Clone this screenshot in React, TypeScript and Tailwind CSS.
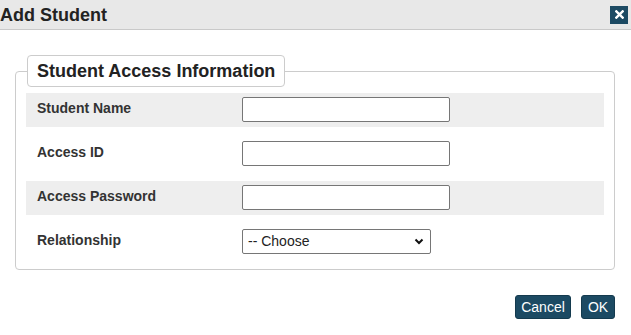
import { useState } from "react";

const rows = [
  { label: "Student Name", kind: "input", shaded: true },
  { label: "Access ID", kind: "input", shaded: false },
  { label: "Access Password", kind: "password", shaded: true },
  { label: "Relationship", kind: "select", shaded: false },
];

export default function App() {
  const [relationship, setRelationship] = useState("");

  return (
    <div className="w-[631px] h-[335px] bg-white font-['Liberation_Sans',Arial,sans-serif] text-[#333]">
      {/* Title bar */}
      <div className="h-[30px] bg-[#e8e8e8] border-b border-[#c9c9c9] flex items-center justify-between pr-[3px]">
        <h2 className="text-[18px] font-bold text-[#222] leading-none">Add Student</h2>
        <button className="w-[18px] h-[18px] bg-[#1c4a63] flex items-center justify-center">
          <svg width="9" height="9" viewBox="0 0 10 10">
            <path d="M1.5 1.5 L8.5 8.5 M8.5 1.5 L1.5 8.5" stroke="white" strokeWidth="2.6" strokeLinecap="square" />
          </svg>
        </button>
      </div>

      {/* Access info */}
      <fieldset className="ml-[15px] mt-[25px] w-[600px] border border-[#cccccc] rounded-[4px] px-[10px] pt-[6px] pb-[10px]">
        <legend className="ml-px h-[32px] px-[9px] border border-[#cccccc] rounded-[4px] bg-white text-[18px] font-bold text-[#222] flex items-center">
          Student Access Information
        </legend>
        <div className="flex flex-col gap-[10px]">
          {rows.map((r) => (
            <div key={r.label} className={`h-[34px] flex items-start ${r.shaded ? "bg-[#eeeeee]" : ""}`}>
              <label className="w-[216px] pl-[11px] pt-[7px] text-[14px] leading-[16px] font-bold text-[#333]">{r.label}</label>
              {r.kind === "select" ? (
                <div className="relative mt-[4px] w-[189px] h-[25px]">
                  <select
                    value={relationship}
                    onChange={(e) => setRelationship(e.target.value)}
                    className="appearance-none w-full h-full border border-[#767676] rounded-[2px] bg-white pl-[5px] text-[14px] text-[#222]"
                  >
                    <option value="">-- Choose</option>
                    <option value="parent">Parent</option>
                    <option value="guardian">Guardian</option>
                  </select>
                  <svg className="absolute right-[7px] top-[9px] pointer-events-none" width="10" height="7" viewBox="0 0 10 7">
                    <path d="M1.5 1.5 L5 5 L8.5 1.5" stroke="#111" strokeWidth="2" fill="none" />
                  </svg>
                </div>
              ) : (
                <input
                  type={r.kind === "password" ? "password" : "text"}
                  className="mt-[4px] w-[208px] h-[25px] border border-[#767676] rounded-[2px] bg-white px-1 text-[14px]"
                />
              )}
            </div>
          ))}
        </div>
      </fieldset>

      {/* Actions */}
      <div className="mt-[25px] w-[615px] flex justify-end gap-[10px]">
        <button className="w-[56px] h-[24px] bg-[#1c4a63] border border-[#143a4e] rounded-[3px] text-white text-[14px] leading-none">
          Cancel
        </button>
        <button className="w-[34px] h-[24px] bg-[#1c4a63] border border-[#143a4e] rounded-[3px] text-white text-[14px] leading-none">
          OK
        </button>
      </div>
    </div>
  );
}
